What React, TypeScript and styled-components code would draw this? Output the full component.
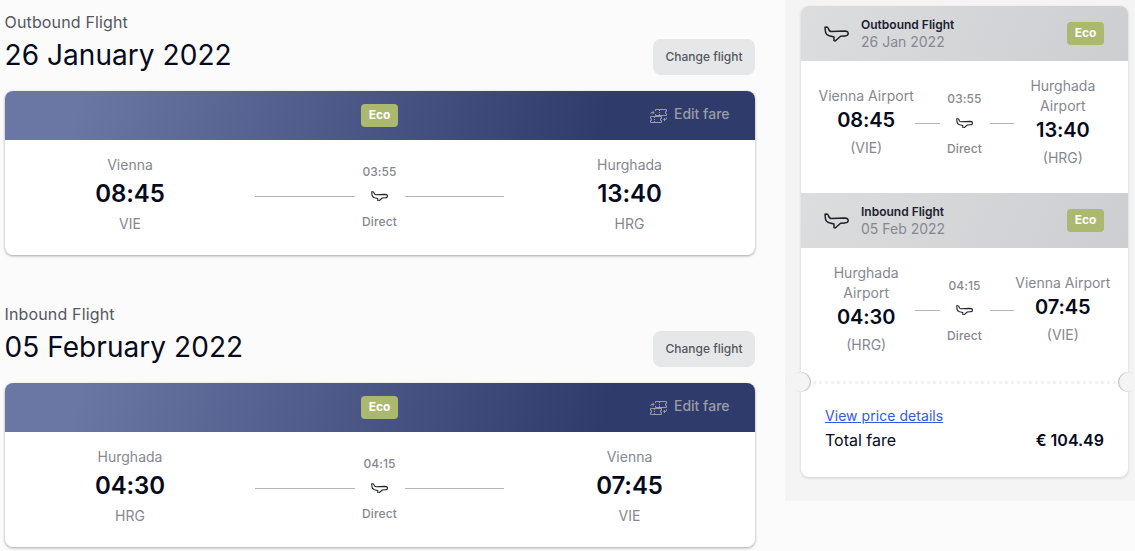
import styled, { createGlobalStyle } from "styled-components";

const flights = [
  {
    title: "Outbound Flight",
    date: "26 January 2022",
    shortDate: "26 Jan 2022",
    duration: "03:55",
    from: { city: "Vienna", time: "08:45", code: "VIE" },
    to: { city: "Hurghada", time: "13:40", code: "HRG" },
  },
  {
    title: "Inbound Flight",
    date: "05 February 2022",
    shortDate: "05 Feb 2022",
    duration: "04:15",
    from: { city: "Hurghada", time: "04:30", code: "HRG" },
    to: { city: "Vienna", time: "07:45", code: "VIE" },
  },
];

type Flight = (typeof flights)[number];

const PlaneIcon = ({ size }: { size: number }) => (
  <svg
    width={size}
    height={size * 0.64}
    viewBox="0 0 25 16"
    fill="none"
    stroke="#1c2029"
    strokeWidth={size > 20 ? 1.5 : 1.6}
    strokeLinejoin="round"
    strokeLinecap="round"
  >
    <path d="M1 1.2 L2.9 1 C3.9 1 4.2 1.8 4.6 3 C5 4.8 5.8 5.4 7.2 5.4 L20.5 5 C23 5 24.2 6.1 24.2 7.6 C24.2 9.2 23 9.9 21 9.9 L16.6 10.3 L11.2 15 L10 14.6 L10 10.9 L5.2 9.8 C2.9 9.2 1.8 7.8 1.5 6 Z" />
  </svg>
);

const FareIcon = () => (
  <svg width="18" height="16" viewBox="0 0 18 16" fill="none" stroke="#9b9ca8">
    <path d="M5.5 3V1.5H16.5V3.5H15.5V5.5H16.5V7.5H5.5V6" />
    <path d="M9.5 2V3M9.5 4V5M9.5 6V7" />
    <path d="M0.5 8.5H11.5V10.5H10.5V12.5H11.5V14.5H0.5V12.5H1.5V10.5H0.5Z" />
    <path d="M4.5 9V10M4.5 11V12M4.5 13V14" />
    <path d="M0.8 6V5.2C0.8 4.8 1.2 4.5 2 4.5H4M2.5 2.8L4.1 4.5L2.5 6" />
    <path d="M16.5 9.5V10.6C16.5 11.2 16 11.5 15.2 11.5H13.6M15 10L13.5 11.5L15 13" />
  </svg>
);

const Route = ({ flight, compact }: { flight: Flight; compact?: boolean }) => {
  const renderStop = (stop: Flight["from"]) => (
    <Stop>
      <div>{compact ? `${stop.city} Airport` : stop.city}</div>
      <Time $compact={compact}>{stop.time}</Time>
      <Code $compact={compact}>{compact ? `(${stop.code})` : stop.code}</Code>
    </Stop>
  );

  return (
    <RouteGrid $compact={compact}>
      {renderStop(flight.from)}
      <Leg $compact={compact}>
        <LegText>{flight.duration}</LegText>
        <LegTrack $compact={compact}>
          <LegLine />
          <LegPlane>
            <PlaneIcon size={17} />
          </LegPlane>
          <LegLine />
        </LegTrack>
        <LegText>Direct</LegText>
      </Leg>
      {renderStop(flight.to)}
    </RouteGrid>
  );
};

const App = () => {
  return (
    <>
      <GlobalStyle />
      <Page>
        <Main>
          {flights.map((flight) => (
            <Section key={flight.title}>
              <SectionHead>
                <div>
                  <Title>{flight.title}</Title>
                  <FlightDate>{flight.date}</FlightDate>
                </div>
                <ChangeButton>Change flight</ChangeButton>
              </SectionHead>
              <Card>
                <CardHeader>
                  <EcoBadge>Eco</EcoBadge>
                  <EditFare>
                    <FareIcon />
                    <EditLabel>Edit fare</EditLabel>
                  </EditFare>
                </CardHeader>
                <Route flight={flight} />
              </Card>
            </Section>
          ))}
        </Main>

        <Sidebar>
          <Summary>
            {flights.map((flight) => (
              <div key={flight.title}>
                <SummaryHeader>
                  <PlaneIcon size={25} />
                  <SummaryInfo>
                    <SummaryTitle>{flight.title}</SummaryTitle>
                    <SummaryDate>{flight.shortDate}</SummaryDate>
                  </SummaryInfo>
                  <EcoBadge>Eco</EcoBadge>
                </SummaryHeader>
                <Route flight={flight} compact />
              </div>
            ))}
            <Tear>
              <Notch $side="left" />
              <Dots />
              <Notch $side="right" />
            </Tear>
            <SummaryFooter>
              <DetailsLink href="#">View price details</DetailsLink>
              <Total>
                <span>Total fare</span>
                <Price>€ 104.49</Price>
              </Total>
            </SummaryFooter>
          </Summary>
        </Sidebar>
      </Page>
    </>
  );
};

const GlobalStyle = createGlobalStyle`
  * {
    box-sizing: border-box;
  }

  body {
    margin: 0;
    background: #fbfbfb;
    color: #050a1c;
    font-family: Inter, "Liberation Sans", sans-serif;
    overflow: hidden;
  }
`;

const Page = styled.div`
  display: flex;
  align-items: flex-start;
  justify-content: space-between;
  width: 1135px;
  height: 551px;
  overflow: hidden;
`;

const Main = styled.main`
  width: 755px;
  padding: 10px 0 0 5px;
`;

const Section = styled.section`
  height: 292px;
`;

const SectionHead = styled.div`
  display: flex;
  justify-content: space-between;
  height: 81px;
`;

const Title = styled.div`
  margin-left: -0.5px;
  font-size: 16px;
  line-height: 24px;
  letter-spacing: 0.15px;
  color: #54575f;
`;

const FlightDate = styled.div`
  margin-left: -0.5px;
  font-size: 28px;
  line-height: 42px;
  letter-spacing: 0.06px;
`;

const ChangeButton = styled.button`
  width: 102px;
  height: 36px;
  margin-top: 29px;
  padding: 0;
  border: 0;
  border-radius: 8px;
  background: #e6e7e8;
  color: #54575f;
  font: 500 12px/18px Inter, sans-serif;
`;

const Card = styled.div`
  height: 164px;
  border-radius: 8px;
  background: #fff;
  box-shadow: 0 1px 3px rgba(0, 0, 0, 0.35);
  overflow: hidden;
`;

const CardHeader = styled.div`
  display: grid;
  grid-template-columns: 1fr auto 1fr;
  align-items: center;
  height: 49px;
  padding-right: 25px;
  padding-left: 24px;
  background: linear-gradient(105deg, #6a76a4 10%, #2f3b6a 80%);
`;

const EcoBadge = styled.span`
  grid-column: 2;
  width: 37px;
  height: 23px;
  border-radius: 4px;
  background: #abb870;
  color: #fff;
  font-size: 12px;
  font-weight: 700;
  line-height: 22px;
  text-align: center;
`;

const EditFare = styled.div`
  display: flex;
  align-items: center;
  justify-self: end;
  gap: 6px;
  color: #9b9ca8;
`;

const EditLabel = styled.span`
  width: 56px;
  margin-bottom: 3px;
  font-size: 14px;
  font-weight: 500;
  line-height: 20px;
  white-space: nowrap;
`;

const RouteGrid = styled.div<{ $compact?: boolean }>`
  display: grid;
  grid-template-columns: ${({ $compact }) =>
    $compact ? "repeat(3, 1fr)" : "250px 249px 1fr"};
  align-items: ${({ $compact }) => ($compact ? "center" : "start")};
  height: ${({ $compact }) => ($compact ? "132px" : "115px")};
  padding: ${({ $compact }) => ($compact ? "15px 16px 25px" : "15px 0 0")};
`;

const Stop = styled.div`
  display: flex;
  flex-direction: column;
  align-items: center;
  color: #85888f;
  font-size: 14px;
  line-height: 20px;
  text-align: center;
`;

const Time = styled.div<{ $compact?: boolean }>`
  color: #050a1c;
  font-size: ${({ $compact }) => ($compact ? "20px" : "24px")};
  font-weight: 600;
  line-height: ${({ $compact }) => ($compact ? "28px" : "38px")};
  letter-spacing: -0.1px;
`;

const Code = styled.div<{ $compact?: boolean }>`
  margin-top: ${({ $compact }) => ($compact ? "4px" : "1px")};
`;

const Leg = styled.div<{ $compact?: boolean }>`
  padding-top: ${({ $compact }) => ($compact ? "3px" : "8px")};
`;

const LegText = styled.div`
  color: #85888f;
  font-size: 12px;
  font-weight: 500;
  line-height: 18px;
  letter-spacing: 0.1px;
  text-align: center;
`;

const LegTrack = styled.div<{ $compact?: boolean }>`
  display: flex;
  align-items: center;
  height: 32px;
  padding-bottom: ${({ $compact }) => ($compact ? "1px" : "2px")};
`;

const LegLine = styled.div`
  flex: 1;
  height: 1px;
  background: #b4b5ba;
`;

const LegPlane = styled.div`
  display: flex;
  justify-content: center;
  width: 50px;
`;

const Sidebar = styled.aside`
  width: 350px;
  height: 501px;
  padding: 6px 7px 0 16px;
  background: #f4f4f4;
`;

const Summary = styled.div`
  height: 471px;
  border-radius: 8px;
  background: #fff;
  box-shadow: 0 1px 3px rgba(0, 0, 0, 0.16);
`;

const SummaryHeader = styled.div`
  display: flex;
  align-items: center;
  height: 55px;
  padding: 0 24px 0 23px;
  background: linear-gradient(115deg, #dcddde, #cdced2);

  div:first-child > & {
    border-radius: 8px 8px 0 0;
  }
`;

const SummaryInfo = styled.div`
  flex: 1;
  margin-left: 12px;
`;

const SummaryTitle = styled.div`
  color: #1c2030;
  font-size: 12px;
  font-weight: 600;
  line-height: 17px;
`;

const SummaryDate = styled.div`
  color: #85888f;
  font-size: 14px;
  line-height: 18px;
`;

const Tear = styled.div`
  display: flex;
  align-items: center;
  height: 20px;
  margin: -8px -10px 0;
`;

const Notch = styled.div<{ $side: "left" | "right" }>`
  width: 20px;
  height: 20px;
  border-radius: 50%;
  background: #f4f4f4;
  box-shadow: ${({ $side }) =>
    $side === "left"
      ? "inset -1px 0 1px rgba(0, 0, 0, 0.25)"
      : "inset 1px 0 1px rgba(0, 0, 0, 0.25)"};
`;

const Dots = styled.div`
  flex: 1;
  height: 3px;
  margin: 0 2px;
  background: repeating-linear-gradient(90deg, #f2f2f2 0 3px, #fff 3px 6px);
`;

const SummaryFooter = styled.div`
  padding: 14px 24px 0;
`;

const DetailsLink = styled.a`
  display: block;
  color: #3657e8;
  font-size: 14px;
  line-height: 20px;
  letter-spacing: 0.05px;
`;

const Total = styled.div`
  display: flex;
  justify-content: space-between;
  margin-top: 1px;
  font-size: 16px;
  line-height: 26px;
`;

const Price = styled.span`
  font-weight: 600;
`;

export default App;
